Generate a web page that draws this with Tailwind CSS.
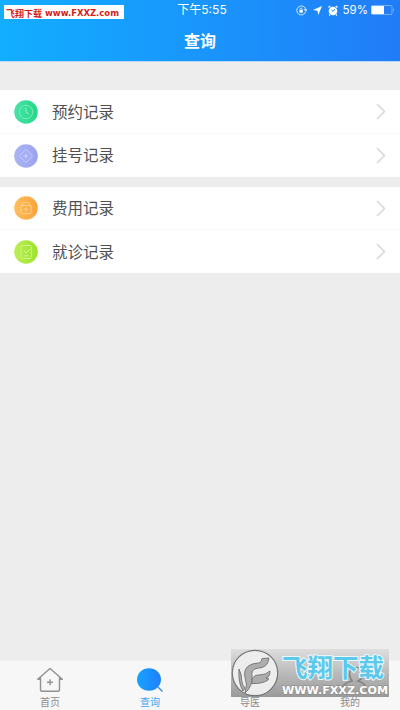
<!DOCTYPE html>
<html lang="zh-CN">
<head>
<meta charset="utf-8">
<title>查询</title>
<script src="https://cdn.jsdelivr.net/npm/@tailwindcss/browser@4"></script>
</head>
<body class="bg-[#ededed]">
<div class="relative flex h-[710px] w-[400px] flex-col overflow-hidden bg-[#ededed] font-['Liberation_Sans','Noto_Sans_CJK_SC',sans-serif]">
  <header class="h-[62px] shrink-0 border-b border-[#b9d8f6] bg-linear-to-r from-[#12aeff] to-[#217cf8] bg-clip-padding text-white">
    <div class="grid h-5 grid-cols-[1fr_auto_1fr] items-center pr-[5px]">
      <span></span>
      <span class="pl-[9px] font-['Inter','Noto_Sans_CJK_SC',sans-serif] text-[12px] leading-5">下午5:55</span>
      <div class="flex items-center justify-end">
        <svg class="mr-[6px] h-[11px] w-[11px]" viewBox="0 0 11 11" fill="none" stroke="white"><path d="M9.6 6.8A4.5 4.5 0 1 1 9.6 4M8.4 4.6h2.4L9.8 6.3z" stroke-width=".8"/><rect x="3.4" y="5" width="3.4" height="2.7" fill="white" stroke="none"/><path d="M4.1 5V4a1 1 0 0 1 2 0v1" stroke-width=".7"/></svg>
        <svg class="mr-[6px] h-[9px] w-[9px]" viewBox="0 0 9 9" fill="white"><path d="M9 0 5.3 9 4.5 4.7 0 4z"/></svg>
        <svg class="mr-[5px] h-[11px] w-[10px]" viewBox="0 0 10 11"><circle cx="5" cy="6" r="4.3" fill="white"/><path d="M.5 2.5 2.3 1M9.5 2.5 7.7 1M2 9.5l-.8 1M8 9.5l.8 1" stroke="white" stroke-width="1.3"/><path d="M3.3 5 5 6.4 7 4" fill="none" stroke="#248aff" stroke-width="1"/></svg>
        <span class="mr-[3px] font-['Inter',sans-serif] text-[11.5px] leading-5">59%</span>
        <svg class="h-[10px] w-[24px]" viewBox="0 0 24 10"><rect x=".5" y=".5" width="20.5" height="9" rx="1" fill="none" stroke="#8abfff" stroke-width=".8"/><rect x=".5" y="1" width="12.5" height="8" fill="white"/><path d="M22 3.2q1.6 1.8 0 3.6z" fill="#c5e0ff"/></svg>
      </div>
    </div>
    <h1 class="pt-px text-center text-[16px] leading-[41px] font-bold">查询</h1>
  </header>

  <main class="flex-1 pt-7 text-[15.5px] text-[#505050]">
    <section class="mb-[10px] bg-white">
      <div class="flex h-11 items-center border-b border-[#fafafa] px-[14px]">
        <svg class="mr-[14px] h-6 w-6" viewBox="0 0 24 24" fill="none"><defs><linearGradient id="g1"><stop stop-color="#48e3a6"/><stop offset="1" stop-color="#25d886"/></linearGradient></defs><circle cx="12" cy="12" r="11.8" fill="url(#g1)"/><circle cx="12" cy="12" r="6.7" stroke="#7beabb"/><path d="M12 7.5V12l3 2.5" stroke="#93efcb"/></svg>
        <span class="flex-1 pt-[2px]">预约记录</span>
        <svg class="h-[17px] w-[10px]" viewBox="0 0 10 17" fill="none" stroke="#d8d8d8" stroke-width="1.5"><path d="m1 1 7.5 7.5L1 16"/></svg>
      </div>
      <div class="flex h-[43px] items-center px-[14px]">
        <svg class="mr-[14px] h-6 w-6" viewBox="0 0 24 24" fill="none"><defs><linearGradient id="g2"><stop stop-color="#acb3f5"/><stop offset="1" stop-color="#9aa3ee"/></linearGradient></defs><circle cx="12" cy="12" r="11.8" fill="url(#g2)"/><rect x="7.2" y="7.2" width="9.6" height="9.6" rx="1.5" transform="rotate(45 12 12)" stroke="#bdc4fa"/><path d="M12 9.5v5M9.5 12h5" stroke="#d0d5ff"/></svg>
        <span class="flex-1 pt-px">挂号记录</span>
        <svg class="h-[17px] w-[10px]" viewBox="0 0 10 17" fill="none" stroke="#d8d8d8" stroke-width="1.5"><path d="m1 1 7.5 7.5L1 16"/></svg>
      </div>
    </section>
    <section class="bg-white">
      <div class="flex h-[43px] items-center border-b border-[#fafafa] px-[14px]">
        <svg class="mr-[14px] h-6 w-6" viewBox="0 0 24 24" fill="none"><defs><linearGradient id="g3"><stop stop-color="#ffbd5c"/><stop offset="1" stop-color="#faa33b"/></linearGradient></defs><circle cx="12" cy="12" r="11.8" fill="url(#g3)"/><path d="M7 9.5h10v7q0 1-1 1H8q-1 0-1-1zM8.5 9.3V7.5q0-1 1-1h5q1 0 1 1v1.8M12 11v4.5M9.8 13.2h4.4" stroke="#ffd28a"/></svg>
        <span class="flex-1 pt-px">费用记录</span>
        <svg class="h-[17px] w-[10px]" viewBox="0 0 10 17" fill="none" stroke="#d8d8d8" stroke-width="1.5"><path d="m1 1 7.5 7.5L1 16"/></svg>
      </div>
      <div class="flex h-[43px] items-center px-[14px]">
        <svg class="mr-[14px] h-6 w-6" viewBox="0 0 24 24" fill="none"><defs><linearGradient id="g4"><stop stop-color="#bced54"/><stop offset="1" stop-color="#9de42d"/></linearGradient></defs><circle cx="12" cy="12" r="11.8" fill="url(#g4)"/><rect x="7" y="5.5" width="10.3" height="13" rx="1.2" stroke="#cbf38a"/><path d="m9.8 11 2.2 2 4.2-4M10 15.8h4.5" stroke="#d4f696"/></svg>
        <span class="flex-1 pt-[2px]">就诊记录</span>
        <svg class="h-[17px] w-[10px]" viewBox="0 0 10 17" fill="none" stroke="#d8d8d8" stroke-width="1.5"><path d="m1 1 7.5 7.5L1 16"/></svg>
      </div>
    </section>
  </main>

  <nav class="grid h-[50px] shrink-0 grid-cols-4 border-t border-[#f1f1f1] bg-[#f7f7f7] pt-[6px] text-center text-[10px] leading-[12px] text-[#8c8c8c]">
    <div class="flex flex-col items-center gap-[4px]">
      <svg class="h-[26px] w-[28px]" viewBox="0 0 28 26" fill="none" stroke="#919191" stroke-width="1.4" stroke-linejoin="round"><path d="M4.5 12.2H1.7L14 1.5l12.3 10.7h-2.8M4.5 10v12.5q0 1.8 1.8 1.8h15.4q1.8 0 1.8-1.8V10M14 12.2v6M11 15.2h6"/></svg>
      <span>首页</span>
    </div>
    <div class="flex flex-col items-center gap-[4px] text-[#32aaf5]">
      <svg class="h-[26px] w-[28px]" viewBox="0 0 28 26"><defs><linearGradient id="q"><stop stop-color="#16a3ff"/><stop offset="1" stop-color="#2080fa"/></linearGradient></defs><ellipse cx="13" cy="12.5" rx="12" ry="11.3" fill="url(#q)"/><path d="m22 20 4.5 4.5" stroke="#438fe0" stroke-width="1.5"/></svg>
      <span>查询</span>
    </div>
    <div class="pt-[30px]">导医</div>
    <div class="pt-[30px]">我的</div>
  </nav>

  <div class="absolute top-[5px] left-1 h-[14px] w-[120px] bg-white">
    <svg class="h-[14px] w-[120px]" viewBox="0 0 120 14" fill="#d51c20"><text x="2" y="11.7" font-size="9" font-weight="700" textLength="36" lengthAdjust="spacingAndGlyphs" font-family="Noto Sans CJK SC">飞翔下载</text><text x="41" y="11" font-size="9" font-weight="700" textLength="74" lengthAdjust="spacingAndGlyphs" font-family="DejaVu Sans">www.FXXZ.com</text></svg>
  </div>

  <div class="absolute top-[649px] left-[231px] h-[48px] w-[158px] bg-linear-to-b from-[#dedede] to-[#999999]">
    <svg class="h-[49px] w-full" viewBox="0 0 158 49" fill="none">
      <path d="M109 42q3-8 12-10-5-8 0-12 7-4 11 3 1 6-5 9 8 2 9 10" stroke="#828282" stroke-width="1.5"/>
      <circle cx="24" cy="24" r="22.7" fill="#ededed" stroke="#777777" stroke-width="1.2"/>
      <g fill="#adadad" stroke="#707070" stroke-width=".9" stroke-linejoin="round"><path d="M14 44Q17 36 14 28 12 19 20 15.500 24 14 28 14 31 13 31 9.500L38 9Q37 17 31 18.500L25 19.500Q20 21 21 27 22 37 14 44Z"/><path d="M21 31Q22 26 28 26 35 26 39 22 39 28 35 29 39 29 37 31 31 35 21 34.500Z"/><path d="M12 42Q7 34 8 20 11 26 10.500 31 11 36 14 39Z"/></g>
      <text x="51" y="28" font-family="Noto Sans CJK SC" font-size="25" font-weight="700" textLength="102" lengthAdjust="spacingAndGlyphs" fill="#5cc8ec" stroke="#e9f9ff" stroke-width="2" paint-order="stroke">飞翔下载</text>
      <text x="51" y="45" font-family="DejaVu Sans" font-size="10" font-weight="700" textLength="106" lengthAdjust="spacingAndGlyphs" fill="white" stroke="#888888" stroke-width=".8" paint-order="stroke">WWW.FXXZ.COM</text>
    </svg>
  </div>
</div>
</body>
</html>
